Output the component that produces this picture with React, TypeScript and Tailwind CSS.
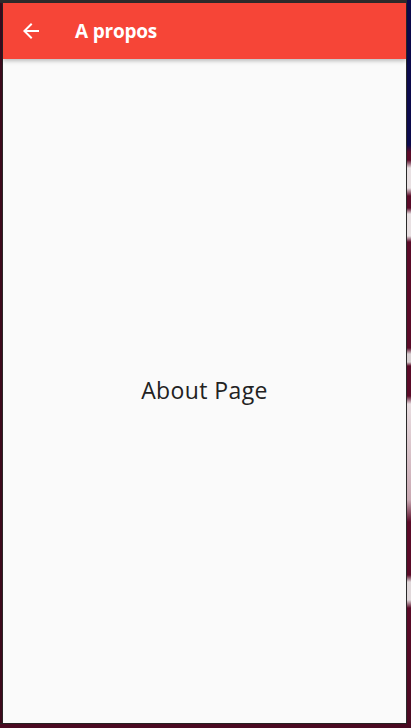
import React from 'react';

const BackArrow = () => (
  <svg viewBox="0 0 24 24" className="w-6 h-6" fill="white">
    <path d="M20 11H7.83l5.59-5.59L12 4l-8 8 8 8 1.41-1.41L7.83 13H20v-2z" />
  </svg>
);

const AboutPage = () => {
  return (
    <div className="flex-1 flex flex-col bg-[#fafafa]">
      <header className="h-14 shrink-0 flex items-center bg-[#f64537] shadow-[0_2px_4px_rgba(0,0,0,0.25)] z-10">
        <button className="w-14 h-14 flex items-center justify-center">
          <BackArrow />
        </button>
        <h1 className="ml-4 text-white text-[19px] font-bold font-['Open_Sans',sans-serif] tracking-[-0.2px]">
          A propos
        </h1>
      </header>
      <main className="flex-1 flex items-center justify-center pb-[2px]">
        <p className="text-[23px] tracking-[0.4px] text-[#222222] font-['Open_Sans',sans-serif]">About Page</p>
      </main>
    </div>
  );
};

export default function App() {
  return (
    <div className="w-[411px] h-[728px] flex overflow-hidden bg-[#4a0a22]">
      <div className="w-[407px] flex flex-col">
        <div className="h-[3px] bg-[#2e2b2b]" />
        <div className="flex-1 flex">
          <div className="w-[2px] bg-[#3d0a1c]" />
          <div className="w-px bg-[#2a2426]" />
          <AboutPage />
          <div className="w-px bg-[#2a2a2a]" />
        </div>
        <div className="h-px bg-[#262222]" />
        <div className="h-[4px] bg-[#4a0a22]" />
      </div>
      <div className="flex-1 bg-[linear-gradient(to_bottom,#0c0a4c_0px,#0c0a4c_145px,#5a0a28_152px,#5a0a28_160px,#e8e0e2_168px,#e8e0e2_188px,#5a0a28_196px,#5a0a28_208px,#e8e0e2_214px,#e8e0e2_236px,#5a0a28_242px,#5a0a28_348px,#d8d0d2_354px,#d8d0d2_362px,#5a0a28_366px,#5a0a28_396px,#e8dde0_404px,#c9a8b2_500px,#5a0a28_522px,#5a0a28_575px,#e0d8da_582px,#e0d8da_600px,#5a0a28_608px,#4a0a22_728px)]" />
    </div>
  );
}
